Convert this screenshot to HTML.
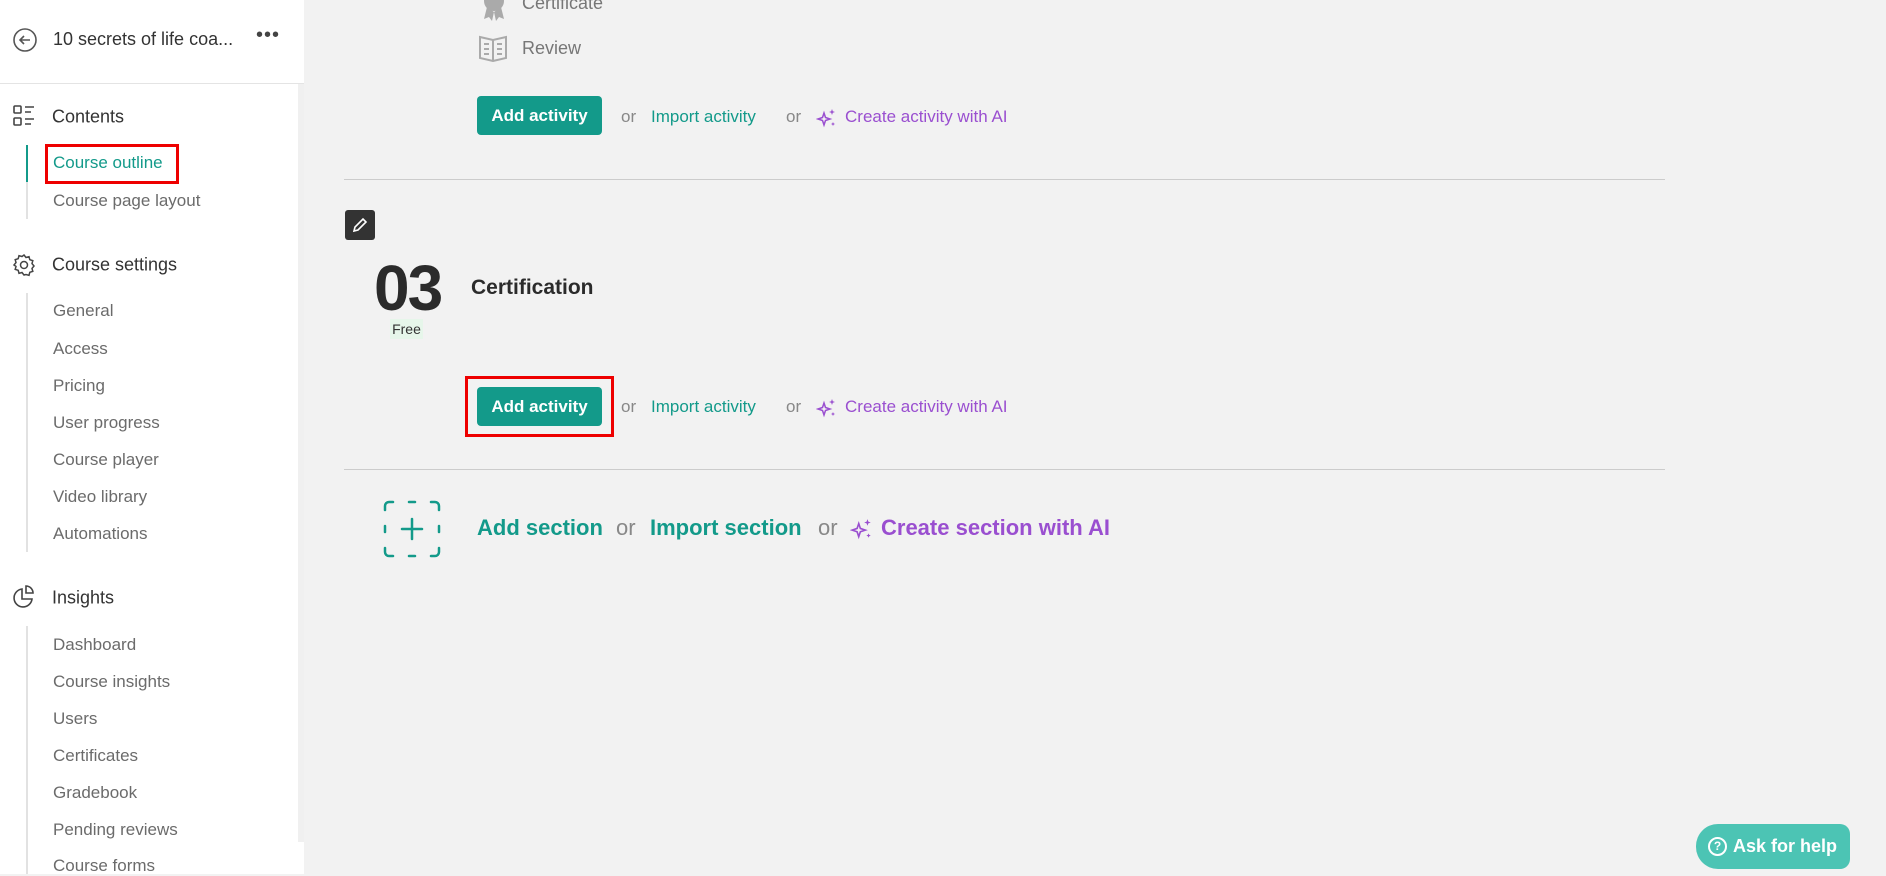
<!DOCTYPE html>
<html><head><meta charset="utf-8"><style>
*{margin:0;padding:0;box-sizing:border-box}
body{width:1886px;height:874px;overflow:hidden;background:#f2f2f2;font-family:"Liberation Sans",sans-serif;position:relative}
.a{position:absolute;white-space:nowrap}
#side{position:absolute;left:0;top:0;width:304px;height:874px;background:#fff}
#sb{position:absolute;left:298px;top:84px;width:6px;height:758px;background:#f0f0f0}
.it{position:absolute;left:53px;font-size:17px;color:#6b6b6b;transform:translateY(-50%)}
.hd{position:absolute;left:52px;font-size:18px;color:#333;transform:translateY(-50%)}
.vl{position:absolute;left:26px;width:2px;background:#e2e2e2}
.btn{position:absolute;left:477px;width:125px;height:39px;background:#139a8a;color:#fff;font-weight:bold;font-size:17px;border-radius:4px;text-align:center;line-height:39px}
.or{color:#888;font-size:17px}
.tl{color:#139a8a;font-size:17px}
.pu{color:#9a4fd0;font-size:17px}
.big{font-size:22px;font-weight:bold}
</style></head><body>
<div id="side">
<svg class="a" style="left:12px;top:27px" width="26" height="26" viewBox="0 0 26 26"><circle cx="13" cy="13" r="11" fill="none" stroke="#555" stroke-width="1.6"/><path d="M18 13H8M12 9l-4 4 4 4" fill="none" stroke="#555" stroke-width="1.6"/></svg>
<div class="a" style="left:53px;top:29px;font-size:18px;color:#333">10 secrets of life coa...</div>
<div class="a" style="left:256px;top:24px;font-size:20px;color:#444;letter-spacing:1px">•••</div>
<div class="a" style="left:0;top:83px;width:304px;height:1px;background:#e4e4e4"></div>
<svg class="a" style="left:13px;top:105px" width="22" height="22" viewBox="0 0 22 22" fill="none" stroke="#444" stroke-width="1.6"><rect x="1" y="1" width="7" height="7" rx="1"/><rect x="1" y="13" width="7" height="7" rx="1"/><path d="M12 2h9M12 7h6M12 14h9M12 19h6"/></svg>
<div class="hd" style="top:117px">Contents</div>
<div class="vl" style="top:145px;height:74px"></div>
<div class="a" style="left:26px;top:145px;width:2px;height:37px;background:#139a8a"></div>
<div class="it" style="top:163px;color:#139a8a">Course outline</div>
<div class="a" style="left:45px;top:144px;width:134px;height:40px;border:3px solid #e00"></div>
<div class="it" style="top:201px">Course page layout</div>
<svg class="a" style="left:12px;top:253px" width="24" height="24" viewBox="0 0 24 24" fill="none" stroke="#444" stroke-width="1.5"><circle cx="12" cy="12" r="3.5"/><path d="M12 2l2 2.5 3-.8.8 3 3 .9-.8 3 2 2.4-2 2.4.8 3-3 .9-.8 3-3-.8L12 22l-2-2.5-3 .8-.8-3-3-.9.8-3L2 12l2-2.4-.8-3 3-.9.8-3 3 .8z"/></svg>
<div class="hd" style="top:265px">Course settings</div>
<div class="vl" style="top:293px;height:259px"></div>
<div class="it" style="top:311px">General</div>
<div class="it" style="top:349px">Access</div>
<div class="it" style="top:386px">Pricing</div>
<div class="it" style="top:423px">User progress</div>
<div class="it" style="top:460px">Course player</div>
<div class="it" style="top:497px">Video library</div>
<div class="it" style="top:534px">Automations</div>
<svg class="a" style="left:12px;top:585px" width="24" height="24" viewBox="0 0 24 24" fill="none" stroke="#444" stroke-width="1.6"><path d="M10 4a9 9 0 1 0 10 10H10z"/><path d="M14 1v7h7a7 7 0 0 0-7-7z"/></svg>
<div class="hd" style="top:598px">Insights</div>
<div class="vl" style="top:626px;height:248px"></div>
<div class="it" style="top:645px">Dashboard</div>
<div class="it" style="top:682px">Course insights</div>
<div class="it" style="top:719px">Users</div>
<div class="it" style="top:756px">Certificates</div>
<div class="it" style="top:793px">Gradebook</div>
<div class="it" style="top:830px">Pending reviews</div>
<div class="it" style="top:866px">Course forms</div>
</div>
<div id="sb"></div>

<svg class="a" style="left:480px;top:-10px" width="28" height="32" viewBox="0 0 28 32" fill="#aaa"><circle cx="14" cy="11" r="10"/><path d="M7 17l-3 12 5-2 3 4 2-9zM21 17l3 12-5-2-3 4-2-9z"/></svg>
<div class="a" style="left:522px;top:-7px;font-size:18px;color:#777">Certificate</div>
<svg class="a" style="left:478px;top:34px" width="30" height="28" viewBox="0 0 30 28" fill="none" stroke="#aaa" stroke-width="2"><path d="M2 3l13 3 13-3v21l-13 3-13-3zM15 6v21M6 10h5M6 15h5M6 20h5M19 10h5M19 15h5M19 20h5"/></svg>
<div class="a" style="left:522px;top:38px;font-size:18px;color:#777">Review</div>

<div class="btn" style="top:96px">Add activity</div>
<div class="a or" style="top:107px;left:621px">or</div>
<div class="a tl" style="top:107px;left:651px">Import activity</div>
<div class="a or" style="top:107px;left:786px">or</div>
<svg class="a" style="left:816px;top:107px" width="22" height="22" viewBox="0 0 22 22" fill="none" stroke="#9a4fd0" stroke-width="1.5"><path d="M8 6l1.5 4.5L14 12l-4.5 1.5L8 18l-1.5-4.5L2 12l4.5-1.5z"/><path d="M16 2l.8 2.2L19 5l-2.2.8L16 8l-.8-2.2L13 5l2.2-.8z" fill="#9a4fd0" stroke="none"/><path d="M17 15l.6 1.4L19 17l-1.4.6L17 19l-.6-1.4L15 17l1.4-.6z" fill="#9a4fd0" stroke="none"/></svg>
<div class="a pu" style="top:107px;left:845px">Create activity with AI</div>

<div class="a" style="left:344px;top:179px;width:1321px;height:1px;background:#ccc"></div>
<div class="a" style="left:345px;top:210px;width:30px;height:30px;background:#333;border-radius:3px"></div>
<svg class="a" style="left:351px;top:216px" width="18" height="18" viewBox="0 0 18 18" fill="none" stroke="#fff" stroke-width="1.6"><path d="M3 15l1-4 8-8 3 3-8 8z"/></svg>
<div class="a" style="left:374px;top:255px;font-size:64px;font-weight:bold;color:#2b2b2b;line-height:66px;letter-spacing:-2px">03</div>
<div class="a" style="left:390px;top:319px;width:33px;height:20px;background:#e6f6ea;font-size:14px;color:#333;text-align:center;line-height:20px">Free</div>
<div class="a" style="left:471px;top:276px;font-size:21px;font-weight:bold;color:#2b2b2b">Certification</div>

<div class="btn" style="top:387px">Add activity</div>
<div class="a" style="left:465px;top:376px;width:149px;height:61px;border:3px solid #e00"></div>
<div class="a or" style="top:397px;left:621px">or</div>
<div class="a tl" style="top:397px;left:651px">Import activity</div>
<div class="a or" style="top:397px;left:786px">or</div>
<svg class="a" style="left:816px;top:397px" width="22" height="22" viewBox="0 0 22 22" fill="none" stroke="#9a4fd0" stroke-width="1.5"><path d="M8 6l1.5 4.5L14 12l-4.5 1.5L8 18l-1.5-4.5L2 12l4.5-1.5z"/><path d="M16 2l.8 2.2L19 5l-2.2.8L16 8l-.8-2.2L13 5l2.2-.8z" fill="#9a4fd0" stroke="none"/><path d="M17 15l.6 1.4L19 17l-1.4.6L17 19l-.6-1.4L15 17l1.4-.6z" fill="#9a4fd0" stroke="none"/></svg>
<div class="a pu" style="top:397px;left:845px">Create activity with AI</div>

<div class="a" style="left:344px;top:469px;width:1321px;height:1px;background:#ccc"></div>
<svg class="a" style="left:383px;top:500px" width="58" height="58" viewBox="0 0 58 58" fill="none" stroke="#139a8a" stroke-width="2.5" stroke-linecap="round"><path d="M2 10V6a4 4 0 0 1 4-4h4M48 2h4a4 4 0 0 1 4 4v4M56 48v4a4 4 0 0 1-4 4h-4M10 56H6a4 4 0 0 1-4-4v-4M26 2h6M26 56h6M2 26v6M56 26v6"/><path d="M29 19v20M19 29h20" stroke-width="2.5"/></svg>
<div class="a big" style="left:477px;top:515px;color:#139a8a">Add section</div>
<div class="a" style="left:616px;top:515px;font-size:22px;color:#888">or</div>
<div class="a big" style="left:650px;top:515px;color:#139a8a">Import section</div>
<div class="a" style="left:818px;top:515px;font-size:22px;color:#888">or</div>
<svg class="a" style="left:850px;top:517px" width="24" height="24" viewBox="0 0 22 22" fill="none" stroke="#9a4fd0" stroke-width="1.5"><path d="M8 6l1.5 4.5L14 12l-4.5 1.5L8 18l-1.5-4.5L2 12l4.5-1.5z"/><path d="M16 2l.8 2.2L19 5l-2.2.8L16 8l-.8-2.2L13 5l2.2-.8z" fill="#9a4fd0" stroke="none"/><path d="M17 15l.6 1.4L19 17l-1.4.6L17 19l-.6-1.4L15 17l1.4-.6z" fill="#9a4fd0" stroke="none"/></svg>
<div class="a big" style="left:881px;top:515px;color:#9a4fd0">Create section with AI</div>

<div class="a" style="left:1696px;top:824px;width:154px;height:45px;background:#4cc4b4;border-radius:22px 10px 10px 22px;color:#fff;font-weight:bold;font-size:18px;line-height:45px;padding-left:12px">
<span style="display:inline-block;width:19px;height:19px;border:2px solid #fff;border-radius:50%;font-size:12px;line-height:15px;text-align:center;vertical-align:2px;margin-right:6px">?</span>Ask for help</div>
</body></html>
